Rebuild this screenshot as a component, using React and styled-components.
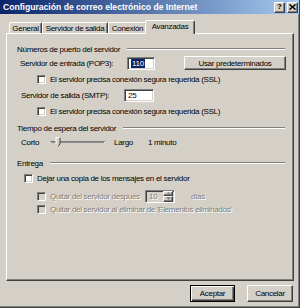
import React from "react";
import styled, { createGlobalStyle, css } from "styled-components";

const GlobalStyle = createGlobalStyle`
  html, body { margin: 0; padding: 0; background: #d4d0c8; }
  body {
    font-family: "Liberation Sans", Arial, sans-serif;
    font-size: 8px;
    letter-spacing: -0.3px;
    color: #000;
  }
  * { box-sizing: border-box; }
`;

const raised = css`
  background: #d4d0c8;
  border-top: 1px solid #fff;
  border-left: 1px solid #fff;
  border-right: 1px solid #404040;
  border-bottom: 1px solid #404040;
  box-shadow: inset -1px -1px 0 #808080;
`;

const sunken = css`
  border-top: 1px solid #808080;
  border-left: 1px solid #808080;
  border-right: 1px solid #fff;
  border-bottom: 1px solid #fff;
  box-shadow: inset 1px 1px 0 #404040, inset -1px -1px 0 #d4d0c8;
`;

const Window = styled.div`
  width: 300px;
  height: 308px;
  display: flex;
  flex-direction: column;
  background: #d4d0c8;
  border-right: 1px solid #404040;
  border-bottom: 1px solid #404040;
  box-shadow: inset -1px -1px 0 #808080;
`;

const TitleBar = styled.div`
  height: 14px;
  display: flex;
  align-items: center;
  padding: 0 1px 0 3px;
  background: linear-gradient(to right, #0a246a, #a6caf0);
  color: #fff;
  font-weight: bold;
  font-size: 8.6px;
  letter-spacing: 0;
`;

const CaptionButtons = styled.div`
  margin-left: auto;
  display: flex;
  gap: 2px;
`;

const CaptionButton = styled.div`
  ${raised};
  width: 11px;
  height: 11px;
  display: flex;
  align-items: center;
  justify-content: center;
  color: #000;
  font-weight: bold;
  font-size: 8px;
  line-height: 1;
`;

const Body = styled.div`
  display: flex;
  flex-direction: column;
  padding: 0 0 0 6px;
`;

const TabStrip = styled.div`
  display: flex;
  align-items: flex-end;
  height: 13px;
  margin-top: 6px;
  padding-left: 3px;
  position: relative;
  z-index: 1;
`;

const Tab = styled.div`
  ${raised};
  box-shadow: inset -1px 0 0 #808080;
  border-bottom: none;
  border-radius: 2px 2px 0 0;
  width: ${(p) => p.$w}px;
  height: 11px;
  display: flex;
  align-items: center;
  justify-content: center;
  white-space: nowrap;
  ${(p) =>
    p.$active &&
    css`
      height: 14px;
      margin: 0 -2px -1px -2px;
      position: relative;
      z-index: 2;
      padding-bottom: 2px;
    `}
`;

const Panel = styled.div`
  ${raised};
  width: 288px;
  height: 248px;
  padding: 10px 8px 0 10px;
  display: flex;
  flex-direction: column;
`;

const SectionHeader = styled.div`
  display: flex;
  align-items: center;
  height: 10px;
  margin-top: ${(p) => p.$mt || 0}px;
  gap: 7px;
  white-space: nowrap;
  &::after {
    content: "";
    flex: 1;
    height: 0;
    border-top: 1px solid #808080;
    border-bottom: 1px solid #fff;
  }
`;

const Row = styled.div`
  display: flex;
  align-items: center;
  height: ${(p) => p.$h || 10}px;
  margin-top: ${(p) => p.$mt || 0}px;
  padding-left: ${(p) => p.$indent || 0}px;
  white-space: nowrap;
`;

const Label = styled.span`
  width: ${(p) => (p.$w ? `${p.$w}px` : "auto")};
  flex: none;
  margin-left: ${(p) => p.$ml || 0}px;
  ${(p) =>
    p.$disabled &&
    css`
      color: #808080;
      text-shadow: 1px 1px 0 #fff;
    `}
`;

const TextBox = styled.div`
  ${sunken};
  width: ${(p) => p.$w}px;
  height: 13px;
  background: ${(p) => (p.$disabled ? "#d4d0c8" : "#fff")};
  display: flex;
  align-items: center;
  padding-left: 3px;
  position: relative;
  color: ${(p) => (p.$disabled ? "#808080" : "#000")};
`;

const Selected = styled.span`
  background: #0a246a;
  color: #fff;
  padding: 0 1px;
  line-height: 9px;
`;

const PushButton = styled.div`
  ${raised};
  width: ${(p) => p.$w}px;
  height: ${(p) => p.$h}px;
  margin-left: ${(p) => (p.$push ? "auto" : "0")};
  margin-right: ${(p) => p.$mr || 0}px;
  display: flex;
  align-items: center;
  justify-content: center;
  ${(p) =>
    p.$default &&
    css`
      border: 1px solid #000;
      box-shadow: inset 1px 1px 0 #fff, inset -1px -1px 0 #404040,
        inset -2px -2px 0 #808080;
    `}
`;

const CheckBox = styled.span`
  ${sunken};
  width: 9px;
  height: 9px;
  flex: none;
  background: ${(p) => (p.$disabled ? "#d4d0c8" : "#fff")};
  margin-right: 4px;
`;

const Spinner = styled.div`
  ${sunken};
  width: 30px;
  height: 13px;
  background: #d4d0c8;
  display: flex;
  align-items: center;
  padding-left: 3px;
  margin-left: 1px;
  color: #808080;
  text-shadow: 1px 1px 0 #fff;
`;

const SpinButtons = styled.div`
  margin-left: auto;
  margin-right: 1px;
  display: flex;
  flex-direction: column;
  height: 11px;
`;

const SpinButton = styled.div`
  ${raised};
  width: 10px;
  height: 5.5px;
  display: flex;
  align-items: center;
  justify-content: center;
`;

const Footer = styled.div`
  display: flex;
  justify-content: flex-end;
  gap: 12px;
  margin-top: 4px;
  padding-right: 6px;
`;

const Slider = () => (
  <svg width="56" height="10" viewBox="0 0 56 10" style={{ flex: "none" }}>
    <rect x="0" y="4" width="55" height="1" fill="#808080" />
    <rect x="0" y="5" width="55" height="1" fill="#fff" />
    <rect x="1" y="5" width="53" height="0.6" fill="#404040" />
    <path d="M6 0.5 H10 V7 L8 9 L6 7 Z" fill="#d4d0c8" />
    <path d="M6 7 V0.5 H10" stroke="#fff" strokeWidth="1" fill="none" />
    <path d="M10 0.5 V7 L8 9.2" stroke="#404040" strokeWidth="1" fill="none" />
  </svg>
);

const Arrow = ({ up }) => (
  <svg width="5" height="3" viewBox="0 0 5 3">
    <path d={up ? "M0 3 L2.5 0 L5 3 Z" : "M0 0 L2.5 3 L5 0 Z"} fill="#808080" />
  </svg>
);

const CloseGlyph = () => (
  <svg width="7" height="6" viewBox="0 0 7 6">
    <path d="M0.5 0.5 L6.5 5.5 M6.5 0.5 L0.5 5.5" stroke="#000" strokeWidth="1.5" />
  </svg>
);

export default function App() {
  return (
    <>
      <GlobalStyle />
      <Window>
        <TitleBar>
          <span>Configuración de correo electrónico de Internet</span>
          <CaptionButtons>
            <CaptionButton>?</CaptionButton>
            <CaptionButton>
              <CloseGlyph />
            </CaptionButton>
          </CaptionButtons>
        </TitleBar>
        <Body>
          <TabStrip>
            <Tab $w={33}>General</Tab>
            <Tab $w={66}>Servidor de salida</Tab>
            <Tab $w={39}>Conexión</Tab>
            <Tab $w={50} $active>
              Avanzadas
            </Tab>
          </TabStrip>
          <Panel>
            <SectionHeader>Números de puerto del servidor</SectionHeader>
            <Row $h={14} $mt={2} $indent={3}>
              <Label $w={107}>Servidor de entrada (POP3):</Label>
              <TextBox $w={28}>
                <Selected>110</Selected>
              </TextBox>
              <PushButton $w={102} $h={14} $push $mr={-1}>
                Usar predeterminados
              </PushButton>
            </Row>
            <Row $mt={4} $indent={20}>
              <CheckBox />
              <Label>El servidor precisa conexión segura requerida (SSL)</Label>
            </Row>
            <Row $h={14} $mt={4} $indent={4}>
              <Label $w={103}>Servidor de salida (SMTP):</Label>
              <TextBox $w={30}>25</TextBox>
            </Row>
            <Row $mt={4} $indent={20}>
              <CheckBox />
              <Label>El servidor precisa conexión segura requerida (SSL)</Label>
            </Row>
            <SectionHeader $mt={7}>Tiempo de espera del servidor</SectionHeader>
            <Row $mt={4} $indent={4}>
              <Label $w={29}>Corto</Label>
              <Slider />
              <Label $w={34} $ml={8}>
                Largo
              </Label>
              <Label>1 minuto</Label>
            </Row>
            <SectionHeader $mt={11}>Entrega</SectionHeader>
            <Row $mt={5} $indent={7}>
              <CheckBox />
              <Label>Dejar una copia de los mensajes en el servidor</Label>
            </Row>
            <Row $h={14} $mt={6} $indent={20}>
              <CheckBox $disabled />
              <Label $w={94} $disabled>
                Quitar del servidor después
              </Label>
              <Spinner>
                10
                <SpinButtons>
                  <SpinButton>
                    <Arrow up />
                  </SpinButton>
                  <SpinButton>
                    <Arrow />
                  </SpinButton>
                </SpinButtons>
              </Spinner>
              <Label $ml={16} $disabled>
                días
              </Label>
            </Row>
            <Row $mt={1} $indent={20}>
              <CheckBox $disabled />
              <Label $disabled>
                Quitar del servidor al eliminar de 'Elementos eliminados'
              </Label>
            </Row>
          </Panel>
          <Footer>
            <PushButton $w={45} $h={17} $default>
              Aceptar
            </PushButton>
            <PushButton $w={46} $h={17}>
              Cancelar
            </PushButton>
          </Footer>
        </Body>
      </Window>
    </>
  );
}
